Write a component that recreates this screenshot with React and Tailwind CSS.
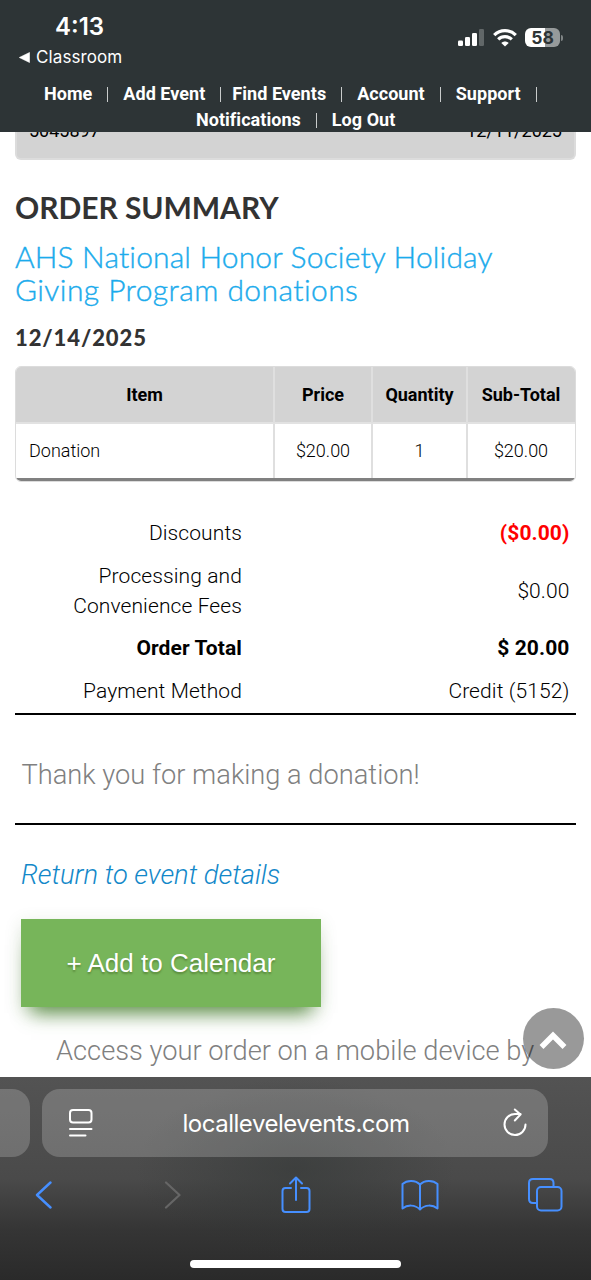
import React from 'react';

const navRows = [
  ['Home', 'Add Event', 'Find Events', 'Account', 'Support'],
  ['Notifications', 'Log Out'],
];

const totals = [
  { label: 'Discounts', value: '($0.00)', valueClass: 'font-bold text-[#f00]' },
  { label: 'Processing and Convenience Fees', value: '$0.00' },
  { label: 'Order Total', value: '$ 20.00', labelClass: 'font-bold', valueClass: 'font-bold' },
  { label: 'Payment Method', value: 'Credit (5152)' },
];

const Signal = () => (
  <svg width="26" height="18" viewBox="0 0 26 18" fill="#fff">
    <rect x="0" y="11.5" width="5" height="5.5" rx="1.3" />
    <rect x="7" y="8" width="5" height="9" rx="1.3" />
    <rect x="14" y="4" width="5" height="13" rx="1.3" />
    <rect x="21" y="0" width="5" height="17" rx="1.3" opacity=".25" />
  </svg>
);

const Wifi = () => (
  <svg width="24" height="18" viewBox="0 0 24 18" fill="none" stroke="#fff" strokeWidth="3.2">
    <path d="M1.2 6.2C7.2.2 16.8.2 22.8 6.2" />
    <path d="M5.2 10.4c3.8-3.7 9.8-3.7 13.6 0" />
    <path d="M12 17.6 8.3 13.9c2.1-2 5.3-2 7.4 0z" fill="#fff" stroke="none" />
  </svg>
);

const Battery = () => (
  <div className="flex items-center">
    <div className="flex h-[19px] w-[35px] items-center justify-center rounded-[6px] bg-[linear-gradient(90deg,#fff_58%,#969a9b_58%)] font-[Inter,sans-serif] text-[17.5px] font-bold leading-none text-[#2d3436]">
      58
    </div>
    <div className="ml-px h-[6px] w-[2px] rounded-r-full bg-[#7f8485]" />
  </div>
);

const StatusBar = () => (
  <div className="flex h-[76px] justify-between font-[Inter,sans-serif] text-white">
    <div className="pl-[19px] pt-[12px]">
      <div className="pl-[36px] text-[24px] font-semibold leading-[30px]">4:13</div>
      <div className="mt-[4px] flex items-center text-[17px] leading-[22px] tracking-[0.1px]">
        <svg width="11" height="11" viewBox="0 0 11 11" className="mr-[6px]">
          <path d="M10.5.5v10L.3 5.5z" fill="#fff" stroke="#fff" strokeWidth=".6" strokeLinejoin="round" />
        </svg>
        Classroom
      </div>
    </div>
    <div className="mt-[28px] flex h-[19px] items-center gap-[8.5px] pr-[28px]">
      <Signal />
      <Wifi />
      <Battery />
    </div>
  </div>
);

const Separator = ({ tight }) => (
  <span className={`ml-[15px] h-[15px] w-px bg-[#c9cccc] ${tight ? 'mr-[11px]' : 'mr-[15px]'}`} />
);

const Nav = () => (
  <nav className="h-[56px] pt-[5px] text-[18px] font-bold leading-[26px] tracking-[0.04px] text-white">
    {navRows.map((row, rowIndex) => (
      <div key={rowIndex} className={`flex items-center ${rowIndex === 0 ? 'pl-[44px]' : 'pl-[196px]'}`}>
        {row.map((item, index) => (
          <React.Fragment key={item}>
            <span>{item}</span>
            {(rowIndex === 0 || index === 0) && <Separator tight={item === 'Add Event'} />}
          </React.Fragment>
        ))}
      </div>
    ))}
  </nav>
);

const ItemsTable = () => (
  <div className="mt-[14px] h-[116px] overflow-hidden rounded-[6px] border border-[#dcdcdc] text-[18px] text-black">
    <div className="grid h-[57px] grid-cols-[259px_98px_95px_1fr] border-b-2 border-[#e2e2e2] bg-[#d3d3d3] text-center font-bold leading-[56px]">
      <div className="border-r-2 border-[#dfdfdf]">Item</div>
      <div className="border-r-2 border-[#dfdfdf]">Price</div>
      <div className="border-r-2 border-[#dfdfdf]">Quantity</div>
      <div className="pr-px">Sub-Total</div>
    </div>
    <div className="grid h-[57px] grid-cols-[259px_98px_95px_1fr] border-b-[3px] border-[#808080] text-center font-light leading-[53px]">
      <div className="border-r-2 border-[#dfdfdf] pl-[13px] text-left">Donation</div>
      <div className="border-r-2 border-[#dfdfdf]">$20.00</div>
      <div className="border-r-2 border-[#dfdfdf]">1</div>
      <div className="pr-px">$20.00</div>
    </div>
  </div>
);

const Totals = () => (
  <div className="mt-[30px] border-b-2 border-black pb-[0.8px] pr-[6.5px] text-[21px] leading-[30px] text-black">
    {totals.map((row) => (
      <div key={row.label} className="flex items-center justify-between py-[6.3px]">
        <div className={`ml-[45px] w-[182px] text-right tracking-[0.1px] ${row.labelClass || 'font-light'}`}>{row.label}</div>
        <div className={`tracking-[0.1px] ${row.valueClass || 'font-light'}`}>{row.value}</div>
      </div>
    ))}
  </div>
);

const BrowserBar = () => (
  <footer className="h-[203px] shrink-0 overflow-hidden bg-[radial-gradient(ellipse_160px_90px_at_50%_45%,rgba(50,54,53,0.55),transparent),linear-gradient(#535353,#4a4a4a_50%,#353535_75%,#2a2a2a)] pt-[12px]">
    <div className="flex gap-[12px]">
      <div className="h-[68px] w-[30px] rounded-r-[18px] bg-white/20" />
      <div className="flex h-[68px] w-[506px] items-center rounded-[18px] bg-white/20 pl-[27px] pr-[20px] text-white">
        <svg width="24" height="28" viewBox="0 0 24 28" fill="none" stroke="#fff" strokeWidth="2" strokeLinecap="round">
          <rect x="1" y="1" width="21.5" height="12.5" rx="3" />
          <path d="M1 20h21.5M1 26.5h15.5" />
        </svg>
        <div className="flex-1 pr-[3px] pt-[2px] text-center font-[Inter,sans-serif] text-[24px] leading-[30px] tracking-[-0.48px]">locallevelevents.com</div>
        <svg width="26" height="30" viewBox="0 0 26 30" fill="none" stroke="#fff" strokeWidth="2" strokeLinecap="round" strokeLinejoin="round">
          <path d="M23.5 16.5A10.5 10.5 0 1 1 13 6h5.5" />
          <path d="m12.8 1.5 5.7 5-5.7 6" />
        </svg>
      </div>
    </div>
    <div className="mt-[18px] flex h-[40px] items-center text-[#468fff]">
      <svg width="18" height="28" viewBox="0 0 18 28" className="ml-[35px]" fill="none" stroke="currentColor" strokeWidth="2.4" strokeLinecap="round" strokeLinejoin="round">
        <path d="M15.5 1.5 2 14l13.5 12.5" />
      </svg>
      <svg width="18" height="28" viewBox="0 0 18 28" className="ml-[111px] text-[#666]" fill="none" stroke="currentColor" strokeWidth="2.2" strokeLinecap="round" strokeLinejoin="round">
        <path d="M2 1.5 15.5 14 2 26.5" />
      </svg>
      <svg width="30" height="38" viewBox="0 0 30 38" className="ml-[98.5px]" fill="none" stroke="currentColor" strokeWidth="2" strokeLinecap="round" strokeLinejoin="round">
        <path d="M10 12H4.500Q1.500 12 1.500 15v18q0 3 3 3h21q3 0 3-3V15q0-3-3-3H20" />
        <path d="M15 24V2M9 7.500 15 1.500l6 6" />
      </svg>
      <svg width="38" height="32" viewBox="0 0 38 32" className="ml-[90.5px]" fill="none" stroke="currentColor" strokeWidth="2" strokeLinecap="round" strokeLinejoin="round">
        <path d="M19 5.500C14.500.8 6 .8 1.500 5v24.500c5-4 12.500-4 17.500 1 5-5 12.500-5 17.500-1V5C32 .8 23.500.8 19 5.500zV30" />
      </svg>
      <svg width="36" height="36" viewBox="0 0 36 36" className="ml-[88px]" fill="none" stroke="currentColor" strokeWidth="2" strokeLinejoin="round">
        <rect x="10" y="10" width="24.500" height="23.500" rx="4" />
        <path d="M10 26H6q-4 0-4-4V6q0-4 4-4h16.500q4 0 4 4v4" />
      </svg>
    </div>
    <div className="mx-auto mt-[45px] h-[8px] w-[211px] rounded-full bg-white" />
  </footer>
);

const App = () => (
  <div className="relative flex h-[1280px] w-[591px] flex-col overflow-hidden bg-white font-[Roboto,sans-serif]">
    <header className="h-[132px] shrink-0 overflow-hidden bg-[#2d3436]">
      <StatusBar />
      <Nav />
    </header>

    <main className="min-h-0 flex-1 overflow-hidden px-[15px]">
      <div className="flex h-[28px] justify-between overflow-hidden rounded-b-[6px] border-2 border-t-0 border-[#dcdcdc] bg-[#d3d3d3] px-[12px] text-[18px] leading-[24px] text-black">
        <span className="-mt-[13px]">5045897</span>
        <span className="-mt-[13px]">12/11/2025</span>
      </div>

      <h1 className="mt-[29px] whitespace-nowrap font-[Lato,sans-serif] text-[30px] font-bold leading-[36px] tracking-[-0.05px] text-[#333]">ORDER SUMMARY</h1>
      <h2 className="mt-[15px] whitespace-nowrap font-[Lato,sans-serif] text-[30px] font-light leading-[33px] text-[#1babec] [-webkit-text-stroke:0.4px_#1babec] [font-variant-ligatures:none]">
        <span className="block tracking-[0.15px]">AHS National Honor Society Holiday</span>
        <span className="block tracking-[0.42px]">Giving Program donations</span>
      </h2>
      <h3 className="mt-[18px] font-[Lato,sans-serif] text-[22px] font-black leading-[28px] tracking-[0.9px] text-[#333]">12/14/2025</h3>

      <ItemsTable />
      <Totals />

      <div className="h-[110px] border-b-2 border-black pl-[6.5px] pt-[42px] text-[27.25px] font-light leading-[36px] text-[#808080]">
        Thank you for making a donation!
      </div>

      <a href="#" className="mt-[32px] block pl-[6px] text-[27.3px] font-light italic leading-[36px] text-[#1388c9]">
        Return to event details
      </a>
      <button className="ml-[6px] mt-[26px] block h-[88px] w-[300px] bg-[#77b55a] font-['Liberation_Sans',sans-serif] text-[26px] text-white shadow-[0_16px_18px_-10px_rgba(60,120,35,0.8),0_4px_16px_rgba(60,100,40,0.15)] [text-shadow:0_2px_2px_#5b8a3c]">
        + Add to Calendar
      </button>
      <p className="mt-[26px] whitespace-nowrap pl-[41px] text-[27.25px] font-light leading-[36px] text-[#808080]">
        Access your order on a mobile device by
      </p>
    </main>

    <button className="absolute left-[522.5px] top-[1008px] flex size-[61px] items-center justify-center rounded-full bg-black/40">
      <svg width="28" height="20" viewBox="0 0 28 20" className="mt-[4px]" fill="none" stroke="#fff" strokeWidth="5.500" strokeLinejoin="miter">
        <path d="M2.500 16 14 4.500 25.500 16" />
      </svg>
    </button>

    <BrowserBar />
  </div>
);

export default App;
